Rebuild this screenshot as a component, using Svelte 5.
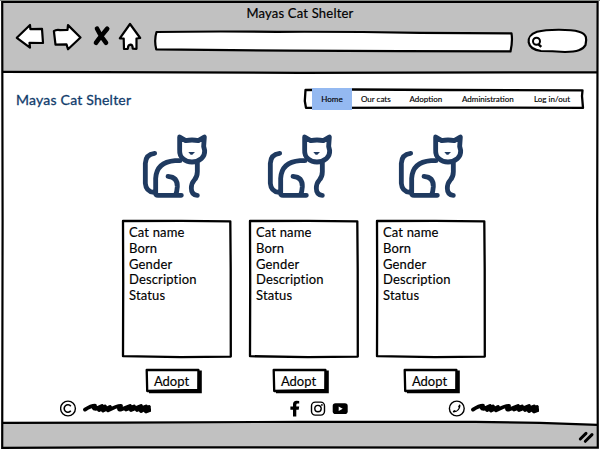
<script>
  const fields = ['Cat name', 'Born', 'Gender', 'Description', 'Status'];
  const cats = [
    { cat: 19, button: 24 },
    { cat: 17, button: 24 },
    { cat: 21, button: 28 }
  ];
  const links = [
    { label: 'Our cats', left: 9, width: 31 },
    { label: 'Adoption', left: 17.5, width: 32 },
    { label: 'Administration', left: 20.5, width: 52 },
    { label: 'Log in/out', left: 20, width: 38 }
  ];
</script>

{#snippet scribble()}
  <svg class="scribble" width="70" height="14" viewBox="0 0 70 14">
    <path d="M4 8.6 Q10 4.6 14 4.6 Q11 8 15 7.8 L21 5 L18 9 L24 5.5 L22 9.5 L29 6 L27 9.3 Q36 4.6 40 4.8 Q36 8.6 40 8.6 L49 5 L45 8.6 L53 5.5 L50 9 L60 5 L56 9 L65 5.5 L60 10 L68 6 L65 10.5 L69 9" fill="none" stroke="#000" stroke-width="3.8" stroke-linejoin="round" stroke-linecap="round" />
  </svg>
{/snippet}

<div class="window">
  <header>
    <div class="title">Mayas Cat Shelter</div>
    <div class="tools">
      <svg width="141" height="34" viewBox="12 20 141 34" fill="#fff" stroke="#000" stroke-width="2.2" stroke-linejoin="round">
        <path d="M16.8 37.8 L30 25 L30.4 29.2 L42 28.8 L43 43 L29.5 42.8 L30 47.6 Z" />
        <path d="M53.9 31.2 Q56 29.4 60 30.1 L67.5 29.8 L68 25.1 L80.5 37.5 L68 49.3 L66.5 44.4 L55.5 44.7 Z" />
        <path d="M97 28.6 C99 33 102 38 106 42.8 M107.2 28.8 C103 34 99 38 96 42.8" fill="none" stroke-width="4.6" stroke-linecap="round" />
        <path d="M130 24 L140.2 38 L136.5 38.5 L136.5 48.8 L132.7 48.6 Q132.8 44.8 130.4 44.7 Q128 44.8 127.8 48.8 L124 49 L123.7 38.5 L119.8 38.4 Z" />
      </svg>
      <svg class="address" width="362" height="24" viewBox="153 30 362 24" fill="#fff" stroke="#000" stroke-width="2.2" stroke-linejoin="round">
        <path d="M156.5 32 Q210 31.1 277 31.8 Q350 31.5 420 32.8 L511.5 33.4 Q512.8 41 510.5 51.4 L400 51.2 L290 50.7 L156.2 49.3 Q154 40 156.5 32 Z" />
      </svg>
      <svg class="search" width="64" height="28" viewBox="526 27 64 28" fill="#fff" stroke="#000" stroke-width="2.2">
        <path d="M537 31.8 C547 29.2 570 29 579 31.7 C587 34 587 39 585.5 45 C583 50 577 51.5 565 52 Q552 51 541 51 C526 49 524.5 36 537 31.8 Z" />
        <circle cx="536.5" cy="41.2" r="3.5" stroke-width="2" />
        <path d="M538.5 44.3 L541.3 46.9" stroke-width="2.4" />
      </svg>
    </div>
  </header>

  <main>
    <div class="top">
      <div class="brand">Mayas Cat Shelter</div>
      <nav>
        <svg class="outline" width="282" height="22" viewBox="303 88 282 22" fill="#fff" stroke="#000" stroke-width="2.3" stroke-linejoin="round">
          <path d="M305.5 90 L352 89.5 L450 90 L582.5 90.3 L582 96 L583 107.8 L450 107.6 L306 107.9 L304.8 101 Z" />
        </svg>
        <a class="home" href="#home">Home</a>
        {#each links as link}
          <a href="#{link.label}" style="margin-left:{link.left}px;width:{link.width}px">{link.label}</a>
        {/each}
      </nav>
    </div>

    <div class="cats">
      {#each cats as item}
        <article>
          <svg class="cat" style="margin-left:{item.cat}px" width="70" height="68" viewBox="30 24 210 204" fill="none" stroke="#1f3a60" stroke-width="14.5" stroke-linecap="round" stroke-linejoin="round">
            <path d="M149 36 L167 47 Q186 43 205 47 L223 36 L221 64 L224 77 Q225 91 214 101 Q202 111 186 111 Q170 111 159 101 Q148 92 149 75 Z" />
            <path d="M150 107 H135 Q80 111 77 160 V205 Q77 211 84 211 H154 M74 85 Q47 88 46 115 V175 Q48 200 72 202 M114 154 Q143 156 142 185 Q141 200 137 209 M202 113 V140 Q202 155 193 165 Q184 175 184 190 Q184 210 202 211" />
            <path d="M175 81 H195 L187 89 H182 Z" fill="#1f3a60" stroke="none" />
          </svg>
          <div class="card">
            <svg class="outline" width="112" height="140" viewBox="0 0 112 140" fill="#fff" stroke="#000" stroke-width="2.3" stroke-linejoin="round">
              <path d="M2 2 L60 1.8 L109.3 2.3 L109.7 50 L109.8 137.6 L60 138.2 L2 137.2 L2.2 65 Z" />
            </svg>
            {#each fields as field}
              <div class="field">{field}</div>
            {/each}
          </div>
          <button style="margin-left:{item.button}px">
            <svg class="outline" width="58" height="27" viewBox="0 0 58 27">
              <path d="M3.5 21 L54 19 V2.5 H56.8 V25.3 H4 Z" fill="#000" />
              <path d="M1.7 2 L53.4 2 L53.3 21.8 L2.2 23 Z" fill="#fff" stroke="#000" stroke-width="2.3" stroke-linejoin="round" />
            </svg>
            <span>Adopt</span>
          </button>
        </article>
      {/each}
    </div>

    <div class="contact">
      <svg class="round" width="17" height="17" viewBox="0 0 17 17" fill="none" stroke="#000">
        <circle cx="8" cy="8.5" r="7.4" stroke-width="1.4" />
        <path d="M10.8 6.2 A3.7 3.7 0 1 0 10.8 10.8" stroke-width="1.6" />
      </svg>
      {@render scribble()}
      <svg class="social" width="60" height="17" viewBox="290 400.5 60 17">
        <path d="M293 417 V410.2 H290.4 V407.1 H293 V404.7 Q293 401.2 296.6 401.2 L299.2 401.4 V404.1 H297.7 Q296.3 404.1 296.3 405.5 V407.1 H299.2 L298.7 410.2 H296.3 V417 Z" />
        <g fill="none" stroke="#000" stroke-width="1.4">
          <rect x="311.5" y="402.6" width="13" height="13" rx="3.8" />
          <circle cx="318" cy="409.1" r="3.2" />
        </g>
        <circle cx="321.9" cy="405.4" r=".9" />
        <rect x="332.7" y="403.8" width="15" height="10.8" rx="2.8" />
        <path d="M338.7 406.9 V411.6 L342.7 409.2 Z" fill="#fff" />
      </svg>
      <svg class="round phone" width="17" height="17" viewBox="0 0 17 17">
        <circle cx="8.8" cy="8.5" r="7.4" fill="none" stroke="#000" stroke-width="1.4" />
        <path d="M11.2 4.6 Q12.6 4.6 12.5 5.8 Q12 11.6 5.8 12.6 Q4.8 12.6 4.8 11 L6.8 10 L8 10.9 Q9.8 9.9 10.9 7.8 L10 6.9 Z" />
      </svg>
      {@render scribble()}
    </div>
  </main>

  <footer>
    <svg width="18" height="14" viewBox="577 430 18 14" stroke="#000" stroke-width="3" stroke-linecap="round">
      <path d="M580.3 439 L586 433.4 M585.3 441.3 L592 434.6" />
    </svg>
  </footer>

  <svg class="outline" width="600" height="450" viewBox="0 0 600 450" fill="none" stroke="#000" stroke-width="2.2">
    <path d="M0 .5 H600" stroke="#848884" stroke-width="1" />
    <path d="M2.2 2 L597.6 2 L597.2 220 L597.8 447.6 L120 447.3 L2.2 447.8 L2.6 220 Z" />
    <path d="M2.5 71.8 L100 72.2 L300 72.8 L597.5 72.3" />
    <path d="M2.5 422.8 L120 422.6 L300 421.8 L475 421.8 L540 422.9 L597.5 424.8" />
  </svg>
</div>

<style>
  :global(body) { margin: 0; background: #fff; }
  .window { position: relative; width: 600px; height: 450px; display: flex; flex-direction: column; overflow: hidden; box-sizing: border-box; background: #fff; font-family: Lato, "Open Sans", sans-serif; color: #000; }
  svg { display: block; flex: none; }
  .outline { position: absolute; left: 0; top: 0; pointer-events: none; }
  header { height: 72px; margin: 0 3px; background: #c1c1c1; }
  .title { height: 20px; padding-top: 5px; box-sizing: border-box; text-align: center; font-size: 13px; line-height: 17px; letter-spacing: .2px; -webkit-text-stroke: .2px #000; }
  .tools { display: flex; padding-left: 9px; }
  .address { margin-top: 10px; }
  .search { margin: 7px 0 0 11px; }
  main { flex: 1; display: flex; flex-direction: column; }
  .top { display: flex; height: 38px; padding: 16px 0 0 16px; box-sizing: border-box; }
  .brand { width: 287px; font-size: 14px; line-height: 23px; letter-spacing: .22px; color: #103c6b; -webkit-text-stroke: .3px #103c6b; }
  nav { position: relative; display: flex; width: 282px; height: 22px; padding-left: 9px; box-sizing: border-box; font-size: 8px; line-height: 22px; -webkit-text-stroke: .15px #000; }
  nav a { position: relative; color: #000; text-decoration: none; white-space: nowrap; }
  .home { width: 40px; background: #94b9f1; text-align: center; }
  .cats { display: flex; gap: 17px; margin: 23px 0 0 121px; }
  article { width: 110px; }
  .card { position: relative; width: 112px; height: 140px; margin: 18px 0 9px; padding: 6px 0 0 8px; box-sizing: border-box; }
  .field { position: relative; height: 15.8px; font-size: 13px; line-height: 15.8px; letter-spacing: .15px; -webkit-text-stroke: .15px #000; }
  button { position: relative; display: block; width: 58px; height: 27px; padding: 0 5px 2px 0; border: 0; background: none; font: 13px/24px Lato, sans-serif; color: #000; -webkit-text-stroke: .15px #000; }
  button span { position: relative; }
  .contact { display: flex; align-items: flex-start; margin-top: 5px; padding-left: 60px; }
  .scribble { margin: 1px 0 0 4px; }
  .social { margin-left: 139px; }
  .phone { margin-left: 98px; }
  footer { display: flex; justify-content: flex-end; height: 26px; margin: 0 3px 2px; padding: 8px 2px 0 0; box-sizing: border-box; background: #c1c1c1; clip-path: polygon(0 0, 80% 0, 100% 3px, 100% 100%, 0 100%); }
</style>
